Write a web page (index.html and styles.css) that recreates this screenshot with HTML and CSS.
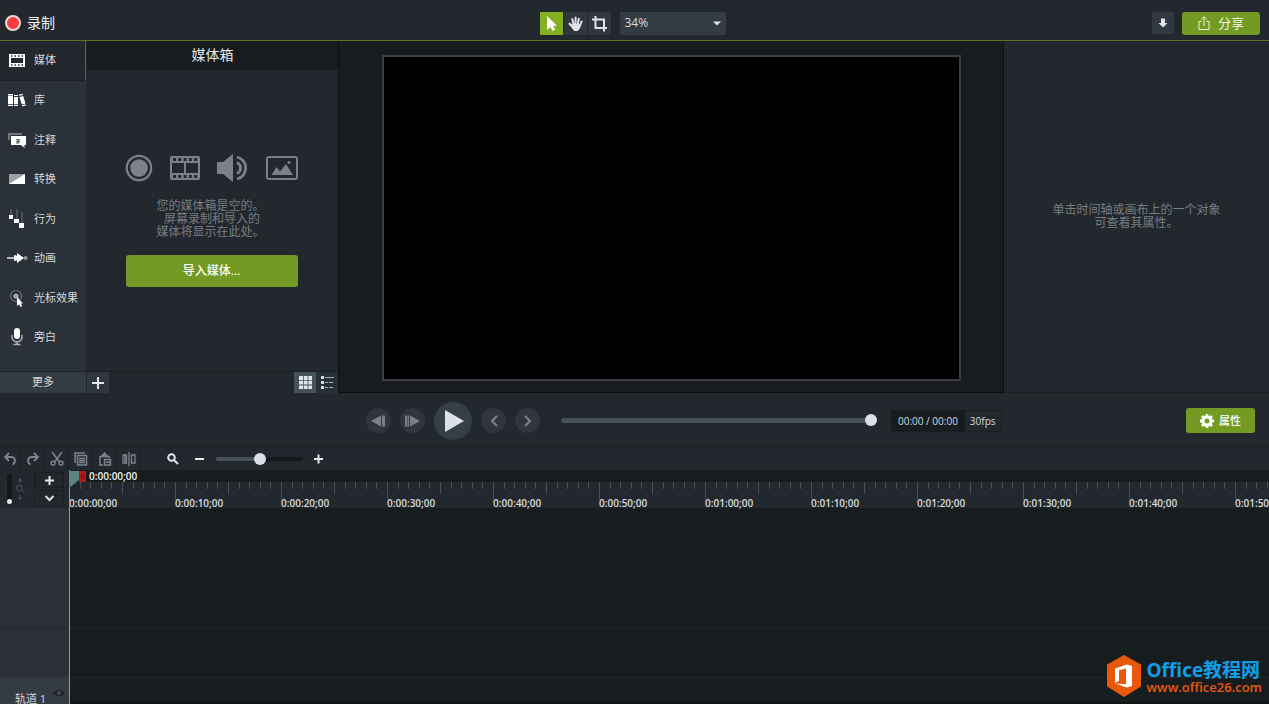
FILE: index.html
```html
<!DOCTYPE html>
<html lang="zh-CN">
<head>
<meta charset="utf-8">
<meta name="viewport" content="width=device-width, initial-scale=1">
<title>媒体箱</title>
<link rel="stylesheet" href="styles.css">
</head>
<body>
<svg class="defs" aria-hidden="true">
  <symbol id="ticks" viewBox="0 0 106 20">
    <path class="tick" d="M.5 0v17"/>
    <path class="tick" d="M11.5 0v7M21.5 0v7M32.5 0v7M42.5 0v7M64.5 0v7M74.5 0v7M85.5 0v7M95.5 0v7M53.5 0v12"/>
  </symbol>
</svg>

<header class="topbar">
  <button class="record"><span class="record-dot"></span>录制</button>
  <div class="canvas-tools">
    <div class="tool-group">
      <button class="tool tool-on" aria-label="选择"><svg width="23" height="23"><path d="M7 4v14l3.400-3 2.200 4 2.600-1.300-2.100-4H17z" fill="#fff"/></svg></button>
      <button class="tool" aria-label="平移"><svg width="23" height="23" fill="none" stroke="#dfe4ea" stroke-linecap="round"><path d="M8.300 7l1.500 6M11.600 5.500V13M14.800 6.700L13.700 13M17.600 9.500l-2 5" stroke-width="2"/><path d="M5.700 11.800l3.600 3.700" stroke-width="2.400"/><path d="M9 12.500l7.300.2-.8 3.600-1.700 2.200h-3.600L8 15.500z" fill="#dfe4ea" stroke-width="1"/></svg></button>
      <button class="tool" aria-label="裁剪"><svg width="23" height="23" fill="none" stroke="#dfe4ea" stroke-width="2"><path d="M4 7.500h12v12M7.500 4v12H19"/></svg></button>
    </div>
    <div class="zoom-select">
      <select aria-label="缩放"><option>34%</option></select>
      <svg class="caret" width="8" height="5"><path d="M0 .5h8L4 4.500z" fill="#dfe4ea"/></svg>
    </div>
  </div>
  <div class="top-actions">
    <button class="download" aria-label="下载"><svg width="10" height="10"><path d="M3 .5h4V5h2.500L5 9.500.5 5H3z" fill="#dfe4ea"/></svg></button>
    <button class="share"><svg width="12" height="16" fill="none" stroke="#eef3df"><path d="M3.500 6.500H1v8h10v-8H8.500M6 11V2M3.200 4.500L6 1.700l2.800 2.800"/></svg>分享</button>
  </div>
</header>

<main class="workspace">
  <nav class="sidebar">
    <div class="tabs">
      <button class="tab tab-on"><svg width="18" height="18"><rect x="1" y="3" width="16" height="13" fill="#fff"/><rect x="3" y="7" width="12" height="5" fill="#23282f"/><path d="M3 5h12M3 14h12" stroke="#23282f" stroke-width="1.500" stroke-dasharray="1.500 2"/></svg>媒体</button>
      <button class="tab"><svg width="18" height="18" fill="#fff"><path d="M0 3h5v1.500H0zM0 5h5v8H0zM0 13.700h5V15H0zM6 4h4v1H6zM6 6h4v7H6zM6 13.700h4V15H6zM11 3.700l3.500-.9.400 1.300-3.500 1zM11.400 6l3.800-1 2.300 7.400-3.800 1.100zM14 14.300l3.500-1 .3 1.200-3.300.9z"/></svg>库</button>
      <button class="tab"><svg width="18" height="18"><path d="M1 9V3h13" fill="none" stroke="#858b90" stroke-width="1.600"/><path d="M3 5h15v9h-1.500v3L13 14H3z" fill="#fff"/><path d="M8.500 8.500h2.500v3.500M11 10H9v2h2" fill="none" stroke="#4e5459" stroke-width="1.200"/></svg>注释</button>
      <button class="tab"><svg width="18" height="18"><path d="M1 4h16v10H1z" fill="#fff"/><path d="M1 4h16L1 14z" fill="#9a9fa3"/></svg>转换</button>
      <button class="tab"><svg width="18" height="20"><path d="M3 0v7M9 0v11M14 3v12" stroke="#4a5158" stroke-width="2"/><path d="M1 6h4v4H1zM6 10h5v4H6zM11 14h5v5h-5z" fill="#fff"/></svg>行为</button>
      <button class="tab"><svg width="20" height="18"><path d="M-1 9h10" stroke="#b5babe" stroke-width="2"/><path d="M6 6l3 .7V4l7 5-7 5v-2.700L6 12z" fill="#fff"/><circle cx="17.500" cy="9" r="2" fill="#91979c"/></svg>动画</button>
      <button class="tab"><svg width="18" height="18"><circle cx="8" cy="7" r="5.500" fill="none" stroke="#6d7379" stroke-width="1.200"/><circle cx="8" cy="7" r="2.600" fill="#a5aaaf"/><path d="M9 8v9l2.200-1.800L12.600 18l1.500-.8-1.300-2.700H15z" fill="#fff"/></svg>光标效果</button>
      <button class="tab"><svg width="18" height="18"><rect x="6" y="0" width="6" height="11" rx="3" fill="#fff"/><path d="M4 7v2a5 5 0 0 0 10 0V7M9 14v2.500M5.500 16.500h7" fill="none" stroke="#aeb3b7" stroke-width="1.500"/></svg>旁白</button>
    </div>
    <button class="more">更多</button>
  </nav>

  <section class="bin">
    <h1 class="bin-title">媒体箱</h1>
    <div class="bin-body">
      <div class="bin-icons">
        <svg width="28" height="28"><circle cx="14" cy="14" r="12.200" fill="none" stroke="#7c8087" stroke-width="2.200"/><circle cx="14" cy="14" r="8.800" fill="#7c8087"/></svg>
        <svg width="30" height="28"><rect y="2" width="30" height="24" rx="2" fill="#7c8087"/><path d="M2 9h12v10H2zM16 9h12v10H16z" fill="#23282f"/><path d="M3 5.500h25M3 22.500h25" stroke="#23282f" stroke-width="3" stroke-dasharray="3 2.300"/></svg>
        <svg width="32" height="28"><path d="M0 8h6l10-8v28L6 20H0z" fill="#7c8087"/><path d="M20 8.500a6 6 0 0 1 0 11M20 3a11.300 11.300 0 0 1 0 22" fill="none" stroke="#7c8087" stroke-width="2.800"/></svg>
        <svg width="32" height="28"><rect x="1" y="3" width="30" height="22" rx="2" fill="none" stroke="#7c8087" stroke-width="2"/><path d="M5.500 21l5-8 3.500 4.500 6-7.500 7 11z" fill="#7c8087"/><circle cx="23" cy="8.500" r="1.500" fill="#7c8087"/></svg>
      </div>
      <p class="hint">您的媒体箱是空的。<br>&nbsp;屏幕录制和导入的<br>媒体将显示在此处。</p>
      <button class="import">导入媒体...</button>
    </div>
    <div class="bin-bar">
      <button class="bin-btn" aria-label="添加"><svg width="12" height="12"><path d="M6 0v12M0 6h12" stroke="#e3e8ec" stroke-width="2"/></svg></button>
      <span class="grow"></span>
      <button class="bin-btn bin-btn-on" aria-label="网格视图"><svg width="13" height="13"><path d="M0 0h4v4H0zM4.800 0h3.800v4H4.800zM9.400 0H13v4H9.400zM0 4.800h4v3.800H0zM4.800 4.800h3.800v3.800H4.800zM9.400 4.800H13v3.800H9.400zM0 9.400h4V13H0zM4.800 9.400h3.800V13H4.800zM9.400 9.400H13V13H9.400z" fill="#dce5e9"/></svg></button>
      <button class="bin-btn bin-btn-flat" aria-label="列表视图"><svg width="13" height="13"><path d="M0 0h3v3H0zM0 5h3v3H0zM0 10h3v3H0z" fill="#d5dade"/><path d="M4 1.500h9M4 6.500h3M8 6.500h4M4 11.500h3M8 11.500h4" stroke="#a5abb0"/></svg></button>
    </div>
  </section>

  <section class="stage"><div class="canvas"></div></section>

  <aside class="properties"><p class="hint">单击时间轴或画布上的一个对象<br>可查看其属性。</p></aside>
</main>

<section class="playback">
  <span></span>
  <div class="transport">
    <button class="round" aria-label="上一帧"><svg width="15" height="12" fill="#7b8087"><path d="M0 6l10-5.500v11zM11 .5h3v11h-3z"/><path d="M10.500 .5v11" stroke="#30363d"/></svg></button>
    <button class="round" aria-label="下一帧"><svg width="15" height="12" fill="#7b8087"><path d="M15 6L5 .5v11zM0 .5h2.500v11H0z"/><path d="M3.500 .5v11" stroke="#7b8087"/></svg></button>
    <button class="round play" aria-label="播放"><svg width="19" height="22"><path d="M0 0l19 11L0 22z" fill="#dce1e9"/></svg></button>
    <button class="round" aria-label="上一个"><svg width="8" height="12" fill="none" stroke="#7b8087" stroke-width="2.200"><path d="M7 1L2 6l5 5"/></svg></button>
    <button class="round" aria-label="下一个"><svg width="8" height="12" fill="none" stroke="#7b8087" stroke-width="2.200"><path d="M1 1l5 5-5 5"/></svg></button>
  </div>
  <input class="scrub" type="range" aria-label="播放位置" min="0" max="100" value="100">
  <div class="timebox"><span class="time">00:00 / 00:00</span><span class="fps">30fps</span></div>
  <button class="prop-btn"><svg width="14" height="14"><circle cx="7" cy="7" r="4" fill="none" stroke="#fff" stroke-width="3"/><g stroke="#fff" stroke-width="2.800"><path d="M7 0v2M7 12v2M0 7h2M12 7h2M2.050 2.050l1.400 1.400M10.550 10.550l1.400 1.400M2.050 11.950l1.400-1.400M10.550 3.450l1.400-1.400"/></g></svg>属性</button>
</section>

<section class="editbar">
  <div class="edit-group">
    <button class="edit" aria-label="撤消"><svg width="14" height="14" fill="none" stroke="#7e848b" stroke-width="1.800"><path d="M6 1L2 5l4 4M2 5h6c5 0 5 6 1.500 7.500"/></svg></button>
    <button class="edit" aria-label="重做"><svg width="14" height="14" fill="none" stroke="#7e848b" stroke-width="1.800"><path d="M8 1l4 4-4 4M12 5H6C1 5 1 11 4.500 12.500"/></svg></button>
    <button class="edit" aria-label="剪切"><svg width="14" height="14" fill="none" stroke="#7e848b" stroke-width="1.500"><path d="M2 0l7.500 10M12 0L4.500 10"/><circle cx="3" cy="11.300" r="2"/><circle cx="11" cy="11.300" r="2"/></svg></button>
    <button class="edit" aria-label="复制"><svg width="14" height="14" fill="none" stroke="#7e848b" stroke-width="1.500"><path d="M1 11V1h10"/><rect x="3.500" y="3.500" width="9" height="9.500"/><path d="M5 6.500h6M5 8.500h6M5 10.500h6"/></svg></button>
    <button class="edit" aria-label="粘贴"><svg width="14" height="14" fill="none" stroke="#7e848b" stroke-width="1.500"><path d="M5 13H2V4.500h9V6"/><path d="M4 4l2.500-3L9 4z" fill="#7e848b"/><rect x="6.500" y="7.500" width="6" height="5.500"/><path d="M8 10.300h4"/></svg></button>
    <button class="edit" aria-label="拆分"><svg width="14" height="14" fill="none" stroke="#7e848b" stroke-width="1.300"><path d="M7 0v14M1 3h3.500v8H1zM9.500 3H13v8H9.500zM3 3v8"/></svg></button>
  </div>
  <div class="zoom-group">
    <svg width="12" height="12" fill="none" stroke="#dfe4ea" stroke-width="2"><circle cx="4.500" cy="4.500" r="3.300"/><path d="M7 7l4 4"/></svg>
    <button class="plain" aria-label="缩小"><svg width="10" height="10"><path d="M0 5h9" stroke="#e6eaee" stroke-width="2"/></svg></button>
    <input class="zoom-range" type="range" aria-label="时间轴缩放" min="0" max="100" value="51">
    <button class="plain" aria-label="放大"><svg width="10" height="10"><path d="M0 5h9M4.500 .5v9" stroke="#e6eaee" stroke-width="2"/></svg></button>
  </div>
</section>

<section class="timeline">
  <div class="track-heads">
    <div class="head-tools">
      <input class="height-range" type="range" aria-label="轨道高度" min="0" max="100" value="0">
      <svg width="10" height="22" fill="none" stroke="#4e545b"><path d="M5 0v5M3 3l2-2 2 2M5 17v5M3 19l2 2 2-2"/><circle cx="4.500" cy="10" r="2.800"/><path d="M6.500 12l3 3"/></svg>
      <div class="head-btns">
        <button class="head-btn" aria-label="添加轨道"><svg width="9" height="9"><path d="M0 4.500h9M4.500 0v9" stroke="#e6eaee" stroke-width="2"/></svg></button>
        <button class="head-btn" aria-label="展开"><svg width="9" height="7"><path d="M.5 1l4 4 4-4" fill="none" stroke="#d9dee3" stroke-width="2"/></svg></button>
      </div>
    </div>
    <div class="head-space"></div>
    <div class="head-gap"></div>
    <div class="track-head"><span>轨道 1</span><svg class="eye" width="12" height="8"><path d="M0 4q6-7 12 0-6 7-12 0z" fill="#20262b"/><circle cx="6" cy="4" r="1.800" fill="#48525a"/></svg></div>
  </div>
  <div class="tracks">
    <div class="playhead-row">0:00:00;00</div>
    <div class="ruler">
      <div class="mark"><svg><use href="#ticks"/></svg>0:00:00;00</div>
      <div class="mark"><svg><use href="#ticks"/></svg>0:00:10;00</div>
      <div class="mark"><svg><use href="#ticks"/></svg>0:00:20;00</div>
      <div class="mark"><svg><use href="#ticks"/></svg>0:00:30;00</div>
      <div class="mark"><svg><use href="#ticks"/></svg>0:00:40;00</div>
      <div class="mark"><svg><use href="#ticks"/></svg>0:00:50;00</div>
      <div class="mark"><svg><use href="#ticks"/></svg>0:01:00;00</div>
      <div class="mark"><svg><use href="#ticks"/></svg>0:01:10;00</div>
      <div class="mark"><svg><use href="#ticks"/></svg>0:01:20;00</div>
      <div class="mark"><svg><use href="#ticks"/></svg>0:01:30;00</div>
      <div class="mark"><svg><use href="#ticks"/></svg>0:01:40;00</div>
      <div class="mark"><svg><use href="#ticks"/></svg>0:01:50;00</div>
    </div>
    <div class="lane-space"></div>
    <div class="lane-gap"></div>
    <div class="lane"></div>
    <div class="playhead">
      <svg width="18" height="18"><path d="M0 1h10v9L0 18z" fill="#5b8485"/><rect x="10" y="1" width="7" height="11" fill="#b3191d"/><path d="M12.500 4v5M14.500 4v5" stroke="#6d1114"/></svg>
    </div>
  </div>
</section>

<div class="watermark">
  <svg width="36" height="42"><path d="M18 0l17 9.500v22L18 42 1 31.500v-22z" fill="#e8590c"/><path d="M9 13.500l12-4 5 1.500v20l-5 1.500L9 28.500l11 .8V13.500l-7 1.700v10.500L9 28z" fill="#fff"/></svg>
  <div><div class="wm-name">Office教程网</div><div class="wm-url">www.office26.com</div></div>
</div>
</body>
</html>
```
FILE: styles.css
```css
* { box-sizing: border-box; }
body {
  margin: 0;
  height: 100vh;
  display: flex;
  flex-direction: column;
  overflow: hidden;
  background: #23282f;
  color: #d5dade;
  font: 11px/16px "Open Sans", "Noto Sans CJK SC", sans-serif;
}
button, select, input { font: inherit; color: inherit; margin: 0; }
button {
  display: flex;
  align-items: center;
  justify-content: center;
  padding: 0;
  border: 0;
  background: none;
}
svg { display: block; flex: none; }
.defs { position: absolute; width: 0; height: 0; }
.grow { flex: 1; }

/* top bar */
.topbar {
  display: grid;
  grid-template-columns: 1fr auto 1fr;
  align-items: center;
  height: 41px;
  padding: 6px 9px 0 5px;
  border-bottom: 1px solid #5d7423;
}
.record { justify-self: start; gap: 6px; font-size: 14px; color: #f0f2f4; }
.record-dot { width: 16px; height: 16px; border-radius: 50%; background: #fb3c3f; border: 2px solid #f4dcdd; }
.canvas-tools, .tool-group, .top-actions { display: flex; align-items: center; }
.canvas-tools { gap: 9px; }
.tool-group { gap: 1px; }
.tool { width: 23px; height: 23px; background: #30373e; }
.tool-on { background: #82b022; }
.zoom-select { position: relative; }
.zoom-select select {
  width: 106px;
  height: 23px;
  padding: 0 5px;
  appearance: none;
  border: 0;
  border-radius: 2px;
  background: #353d44;
  font-size: 12px;
}
.caret { position: absolute; right: 5px; top: 9px; pointer-events: none; }
.top-actions { justify-self: end; gap: 8px; }
.download { width: 22px; height: 22px; border-radius: 2px; background: #323940; }
.share { width: 78px; height: 23px; gap: 8px; border-radius: 3px; background: #739a22; font-size: 13px; color: #f3f7e8; }

/* workspace */
.workspace { display: flex; flex: 352 1 0; min-height: 0; }
.sidebar { display: flex; flex-direction: column; width: 87px; background: #2b3138; border-right: 1px solid #20252b; }
.tabs { flex: 1; display: grid; grid-template-rows: repeat(8, 1fr); padding-bottom: 14px; }
.tab { justify-content: flex-start; gap: 8px; padding-left: 8px; }
.tab svg { width: 18px; overflow: visible; }
.tab-on { background: #23282f; border-right: 1px solid #5a6066; border-bottom: 1px solid #1c2126; }
.more { height: 22px; padding-bottom: 2px; background: #343c43; border-top: 1px solid #20252b; }
.bin { display: flex; flex-direction: column; width: 252px; border-right: 1px solid #0c0e10; }
.bin-title { margin: 0; padding: 4px 0 6px; font-size: 14px; line-height: 19px; font-weight: 400; text-align: center; color: #e6e9ec; background: #171c1e; }
.bin-body { flex: 1; display: flex; flex-direction: column; align-items: center; padding: 84px 2px 0 0; }
.bin-icons { display: flex; gap: 17px; }
.hint { margin: 0; font-size: 12px; line-height: 13px; text-align: center; color: #777c83; }
.bin-body .hint { padding: 17px 2px 17px 0; }
.import { width: 172px; height: 32px; border-radius: 3px; background: #739a22; font-size: 12px; font-weight: 500; color: #fff; }
.bin-bar { display: flex; height: 22px; border-top: 1px solid #1c2126; }
.bin-btn { width: 22px; background: #30373e; }
.bin-btn-on { background: #465259; }
.bin-btn-flat { background: #283037; }
.stage { flex: 1; display: flex; padding: 14px 42px 11px 43px; background: #181b1f; border-right: 1px solid #0c0e10; border-bottom: 1px solid #0c0e10; }
.canvas { flex: 1; background: #000; border: 2px solid #3c3e40; }
.properties { width: 265px; padding-top: 162px; border-bottom: 1px solid #1b2025; }

/* playback */
.playback {
  display: grid;
  grid-template-columns: 350px auto minmax(100px, 316px) auto 1fr;
  align-items: center;
  column-gap: 16px;
  height: 54px;
  padding-top: 2px;
  border-bottom: 1px solid #1b2025;
}
.transport { display: flex; align-items: center; gap: 9px; padding-right: 5px; }
.round { width: 25px; height: 25px; border-radius: 50%; background: #30363d; }
.play { width: 38px; height: 38px; background: #353f46; }
.play svg { margin-left: 2px; }
.scrub, .zoom-range, .height-range { appearance: none; background: none; }
.scrub { width: 100%; height: 12px; }
.scrub::-webkit-slider-runnable-track { height: 5px; border-radius: 3px; background: #465257; }
.scrub::-webkit-slider-thumb { appearance: none; width: 12px; height: 12px; margin-top: -4px; border-radius: 50%; background: #dce0e8; }
.timebox { display: flex; margin-left: -2px; border: 1px solid #191e21; background: #171c1e; font-size: 10px; line-height: 20px; }
.time { padding: 0 7px 0 6px; }
.fps { padding: 0 5px; background: #23282f; }
.prop-btn { justify-self: end; width: 69px; height: 25px; margin-right: 14px; gap: 5px; border-radius: 3px; background: #739a22; font-weight: 500; color: #fff; }

/* edit bar */
.editbar { display: flex; height: 23px; }
.edit-group { display: flex; padding-right: 26px; }
.edit { width: 24px; border-right: 1px solid #1b2025; }
.edit:first-child { width: 21px; }
.zoom-group { display: flex; align-items: center; gap: 16px; }
.zoom-group .plain { width: 10px; height: 10px; }
.zoom-range { width: 87px; height: 12px; margin: 0 -5px; }
.zoom-range::-webkit-slider-runnable-track { height: 4px; border-radius: 2px; background: linear-gradient(90deg, #465257 50%, #15191b 50%); }
.zoom-range::-webkit-slider-thumb { appearance: none; width: 12px; height: 12px; margin-top: -4px; border-radius: 50%; background: #dce0e8; }

/* timeline */
.timeline { display: flex; flex: 234 1 0; min-height: 0; background: #171c1e; }
.track-heads { display: flex; flex-direction: column; width: 69px; background: #2c3038; }
.head-tools { display: flex; align-items: center; height: 38px; padding: 0 5px 0 6px; gap: 3px; background: #23282f; }
.height-range { writing-mode: vertical-lr; direction: rtl; width: 6px; height: 30px; }
.height-range::-webkit-slider-runnable-track { width: 5px; border-radius: 3px; background: #15191b; }
.height-range::-webkit-slider-thumb { appearance: none; width: 5px; height: 5px; border-radius: 50%; background: #e6eaee; }
.head-btns { display: grid; flex: 1; gap: 2px; margin-left: 6px; }
.head-btn { height: 16px; border: 1px solid #1a1f23; background: #22272d; }
.head-space, .lane-space { flex: 1; }
.head-gap, .lane-gap { height: 50px; border-top: 1px solid #20262a; }
.track-head { position: relative; height: 27px; padding: 14px 0 0 15px; line-height: 16px; background: #343b43; overflow: hidden; }
.eye { position: absolute; right: 4px; top: 12px; }
.tracks { position: relative; flex: 1; min-width: 0; display: flex; flex-direction: column; overflow: hidden; font-size: 10px; font-weight: 600; }
.playhead-row { height: 12px; padding-left: 20px; line-height: 12px; color: #eef0f2; }
.ruler { display: grid; grid-template-columns: repeat(12, 106px); height: 26px; background: #23282f; line-height: 12px; }
.mark { display: flex; flex-direction: column; }
.mark svg { width: 106px; height: 20px; margin-bottom: -5px; }
.tick { stroke: #474d52; }
.lane { height: 27px; border-top: 1px solid #20262a; border-bottom: 2px solid #101315; }
.playhead { position: absolute; left: 0; top: 0; bottom: 0; border-left: 1px solid #8f9ea2; }
.playhead svg { margin-left: -1px; }

/* watermark */
.watermark { position: absolute; right: 7px; bottom: 7px; display: flex; gap: 5px; font-weight: 700; white-space: nowrap; }
.wm-name { padding-top: 5px; font-size: 19px; line-height: 20px; color: #109fe8; }
.wm-url { font-size: 13px; line-height: 14px; font-weight: 600; color: #e8590c; }
```
